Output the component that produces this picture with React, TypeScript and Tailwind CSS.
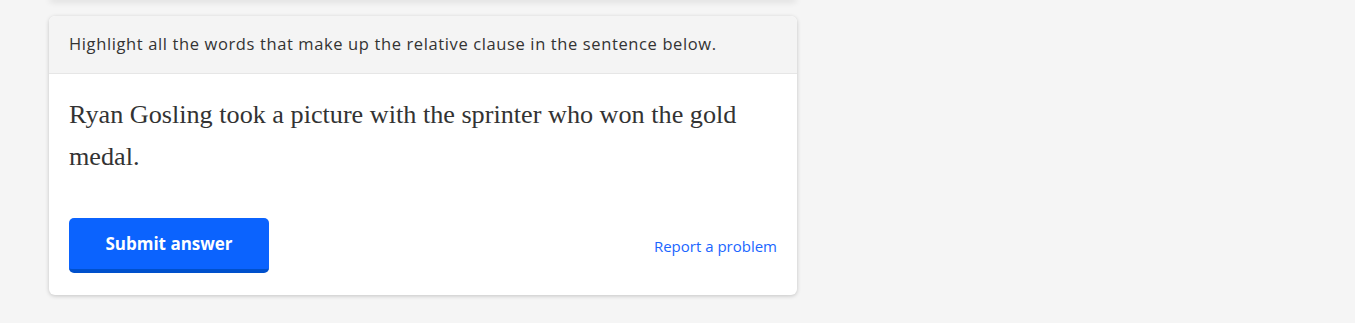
import React from "react";

export default function App() {
  return (
    <div className="min-h-[323px] w-full bg-[#f5f5f5] overflow-hidden" style={{ fontFamily: "'Open Sans', 'Noto Sans', sans-serif" }}>
      <div className="w-[748px] ml-[49px]">
        <div className="h-[4px] -mt-[4px] bg-white rounded-b-md shadow-[0_2px_6px_rgba(0,0,0,0.12)]" />
        <div className="mt-[16px] bg-white rounded-md shadow-[0_1px_4px_rgba(0,0,0,0.2)] overflow-hidden">
          <div className="bg-[#f4f4f4] border-b border-[#e6e6e6] h-[58px] px-[20px] flex items-center">
            <p className="text-[16.5px] tracking-[0.62px] text-[#333]">Highlight all the words that make up the relative clause in the sentence below.</p>
          </div>
          <div className="px-[20px] pt-[20px]">
            <p className="text-[26.2px] leading-[42px] text-[#333]" style={{ fontFamily: "'Liberation Serif', Georgia, serif" }}>
              Ryan Gosling took a picture with the sprinter who won the gold medal.
            </p>
          </div>
          <div className="px-[20px] pt-[40px] pb-[22px] flex items-center justify-between">
            <button className="w-[200px] h-[55px] bg-[#0b63fe] border-b-[4px] border-[#0050cc] rounded-[5px] text-white font-bold text-[17px]">
              Submit answer
            </button>
            <a className="text-[15px] text-[#1a66ff] pt-[2px]">Report a problem</a>
          </div>
        </div>
      </div>
    </div>
  );
}
